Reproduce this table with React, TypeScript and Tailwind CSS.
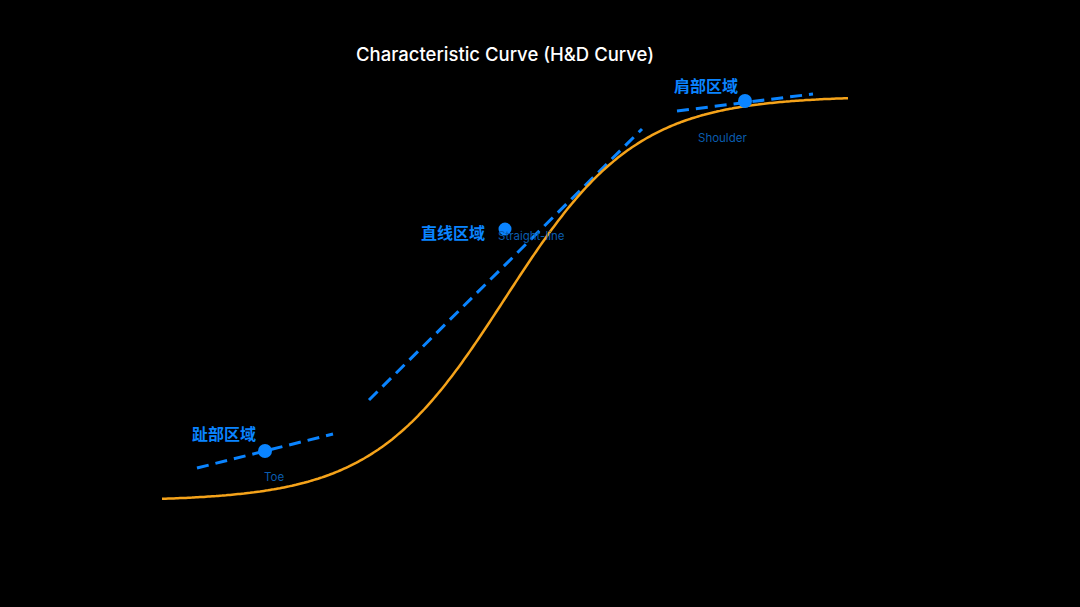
const curve = (() => {
  const pts: string[] = [];
  for (let x = 162; x <= 848; x += 2) {
    const y = 96 + 405 / (1 + Math.exp(0.0152 * (x - 505)));
    pts.push(`${x},${y.toFixed(1)}`);
  }
  return "M" + pts.join(" L");
})();

const font = "Inter, 'Noto Sans CJK SC', sans-serif";

export default function App() {
  return (
    <div className="w-[1080px] h-[607px] bg-black overflow-hidden">
      <svg width="1080" height="607" viewBox="0 0 1080 607" className="block">
        <text
          x="505"
          y="61"
          textAnchor="middle"
          fill="#ffffff"
          fontSize="18.5"
          fontWeight="500"
          fontFamily={font}
        >
          Characteristic Curve (H&amp;D Curve)
        </text>

        {/* tangent lines */}
        <g stroke="#0a84ff" strokeWidth="3" strokeDasharray="12 7" fill="none">
          <line x1="197" y1="468" x2="333" y2="434" />
          <line x1="369" y1="400" x2="642" y2="129" />
          <line x1="677" y1="111" x2="813" y2="94" />
        </g>

        <path d={curve} stroke="#f5a31a" strokeWidth="2.5" fill="none" />

        <g fill="#0a84ff">
          <circle cx="265" cy="451" r="7" />
          <circle cx="505" cy="229" r="6.5" />
          <circle cx="745" cy="101" r="7" />
        </g>

        <g fill="#0a84ff" fontSize="16" fontWeight="700" fontFamily={font}>
          <text x="192" y="440">趾部区域</text>
          <text x="421" y="239">直线区域</text>
          <text x="674" y="92">肩部区域</text>
        </g>

        <g fill="#0a5cae" fontSize="11.5" fontFamily={font}>
          <text x="264" y="481">Toe</text>
          <text x="498" y="240">Straight-line</text>
          <text x="698" y="142">Shoulder</text>
        </g>
      </svg>
    </div>
  );
}
